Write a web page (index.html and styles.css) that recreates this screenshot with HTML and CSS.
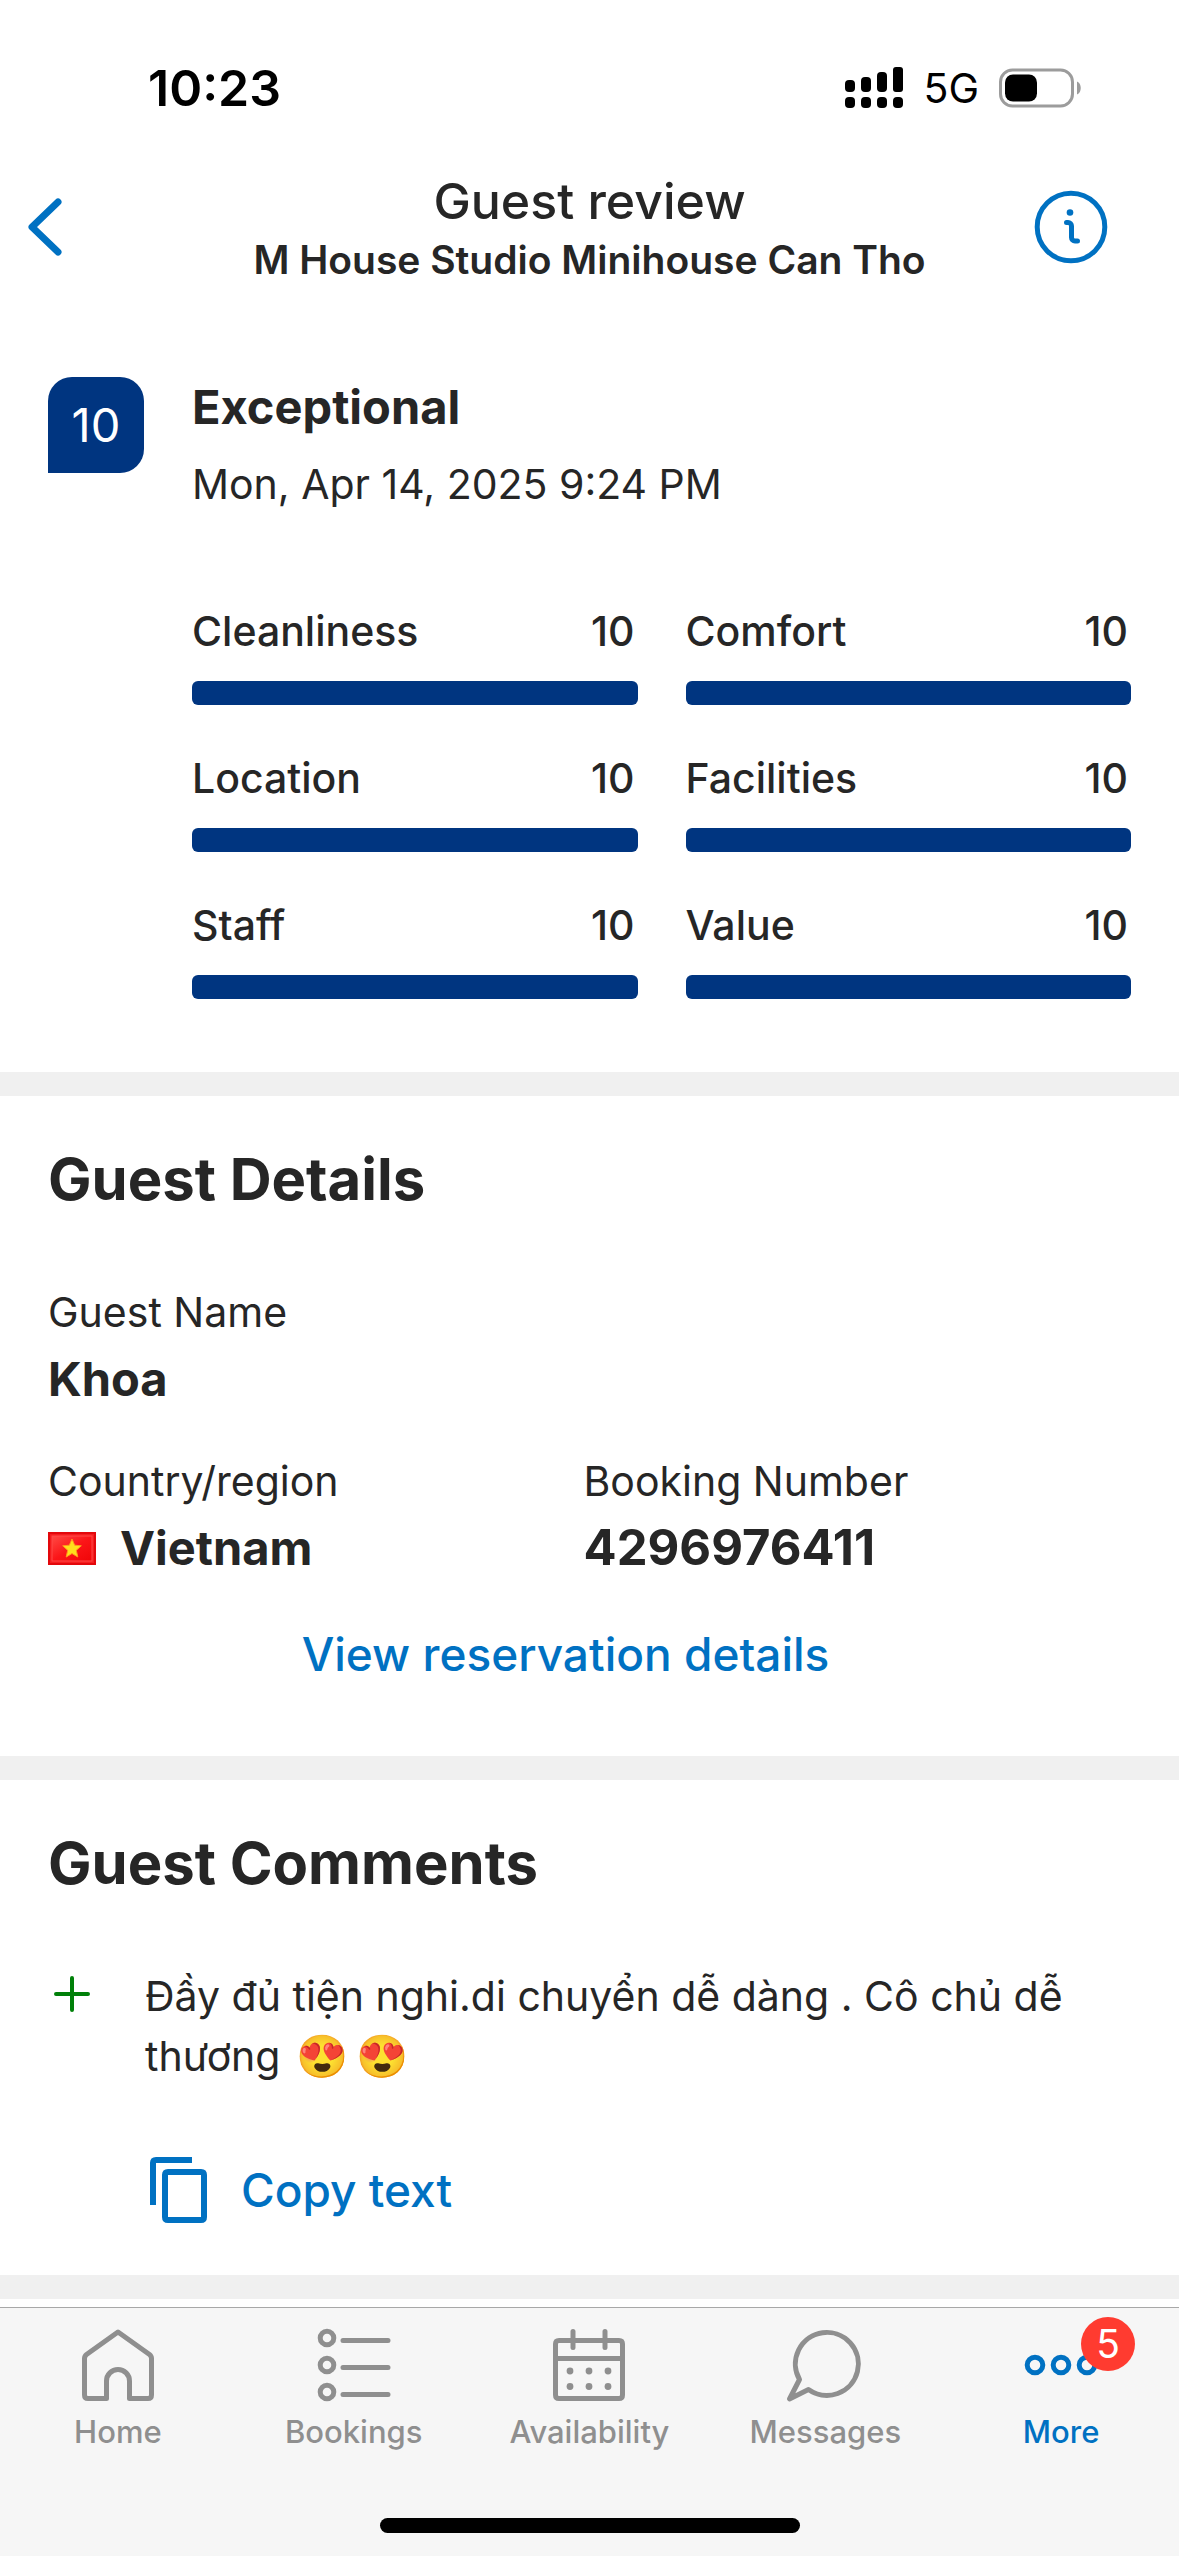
FILE: index.html
```html
<!DOCTYPE html>
<html lang="en">
<head>
<meta charset="utf-8">
<meta name="viewport" content="width=device-width, initial-scale=1">
<title>Guest review</title>
<link rel="stylesheet" href="styles.css">
</head>
<body>
<div class="screen">
  <div class="status">
    <span class="status-time">10:23</span>
    <div class="status-icons">
      <svg class="signal" viewBox="0 0 58 42" aria-hidden="true">
        <rect x="0" y="13" width="10" height="12" rx="4"/><rect x="16" y="10" width="10" height="15" rx="4"/><rect x="32" y="5" width="10" height="20" rx="4"/><rect x="48" y="0" width="10" height="25" rx="3"/>
        <rect x="0" y="30" width="10" height="11" rx="4"/><rect x="16" y="30" width="10" height="11" rx="4"/><rect x="32" y="30" width="10" height="11" rx="4"/><rect x="48" y="30" width="10" height="11" rx="4"/>
      </svg>
      <span class="status-net">5G</span>
      <svg class="battery" viewBox="0 0 82 40" aria-hidden="true">
        <rect x="1.5" y="2" width="72" height="36" rx="12" fill="none" stroke="#9c9c9c" stroke-width="3"/>
        <path d="M78 13.500c5 2 5 11 0 13z" fill="#9c9c9c"/>
        <rect x="6" y="6.500" width="32" height="27" rx="8"/>
      </svg>
    </div>
  </div>

  <header class="topbar">
    <button class="icon-btn back" type="button" aria-label="Back">
      <svg viewBox="0 0 36 60" class="chevron" aria-hidden="true"><path d="M32 5 6 30l26 25"/></svg>
    </button>
    <div class="heading">
      <h1 class="title">Guest review</h1>
      <p class="subtitle">M House Studio Minihouse Can Tho</p>
    </div>
    <button class="icon-btn info" type="button" aria-label="Information">
      <svg viewBox="0 0 72 72" class="info-icon" aria-hidden="true">
        <circle cx="36" cy="36" r="33.800"/>
        <path d="M31.500 31.500H33a3.500 3.500 0 0 1 3.500 3.500V46.500a3.500 3.500 0 0 0 3.500 3.500h2.500"/>
        <circle cx="35" cy="21.500" r="3.300" class="dot"/>
      </svg>
    </button>
  </header>

  <main class="content">
    <section class="review">
      <div class="score">10</div>
      <div class="review-body">
        <h2 class="strong">Exceptional</h2>
        <p class="date">Mon, Apr 14, 2025 9:24 PM</p>
        <div class="ratings">
          <div class="rating"><span>Cleanliness</span><span class="value">10</span><div class="bar"></div></div>
          <div class="rating"><span>Comfort</span><span class="value">10</span><div class="bar"></div></div>
          <div class="rating"><span>Location</span><span class="value">10</span><div class="bar"></div></div>
          <div class="rating"><span>Facilities</span><span class="value">10</span><div class="bar"></div></div>
          <div class="rating"><span>Staff</span><span class="value">10</span><div class="bar"></div></div>
          <div class="rating"><span>Value</span><span class="value">10</span><div class="bar"></div></div>
        </div>
      </div>
    </section>

    <section class="section details">
      <h2 class="section-title">Guest Details</h2>
      <dl class="fields">
        <div class="field wide"><dt>Guest Name</dt><dd class="strong">Khoa</dd></div>
        <div class="field"><dt>Country/region</dt>
          <dd class="strong country">
            <svg class="flag" viewBox="0 0 48 33" aria-hidden="true">
              <defs><linearGradient id="flagRed" x1="0" y1="0" x2="1" y2="1"><stop offset="0" stop-color="#ff4a44"/><stop offset=".5" stop-color="#fb1518"/><stop offset="1" stop-color="#f00508"/></linearGradient></defs>
              <rect width="48" height="33" fill="#e3080c"/>
              <rect x="2" y="2" width="44" height="29" fill="#f51d1f"/>
              <rect x="4" y="4" width="40" height="25" fill="url(#flagRed)" stroke="#ff4a48" stroke-width="1"/>
              <path d="M24 7l2.700 6.200 6.600.6-5 4.500 1.500 6.700-5.800-3.500-5.800 3.500 1.500-6.700-5-4.500 6.600-.6z" fill="#ffe01c" stroke="#ff9a1c" stroke-width="1"/>
            </svg>Vietnam</dd></div>
        <div class="field"><dt>Booking Number</dt><dd class="strong number">4296976411</dd></div>
      </dl>
      <a class="action reservation" href="#reservation">View reservation details</a>
    </section>

    <section class="section comments">
      <h2 class="section-title">Guest Comments</h2>
      <div class="comment">
        <svg class="plus" viewBox="0 0 40 40" aria-label="Positive" role="img"><path d="M20 4v32M4 20h32"/></svg>
        <div class="comment-body">
          <p class="comment-text">Đầy đủ tiện nghi.di chuyển dễ dàng . Cô chủ dễ thương <span class="emoji">😍</span><span class="emoji">😍</span></p>
          <button class="action copy" type="button">
            <svg class="copy-icon" viewBox="0 0 60 68" aria-hidden="true"><path d="M4 49V7q0-3 3-3h36M19 16h33q3 0 3 3v42q0 3-3 3H19q-3 0-3-3V19q0-3 3-3z"/></svg>
            Copy text
          </button>
        </div>
      </div>
    </section>
    <div class="section end"></div>
  </main>

  <nav class="tabbar" aria-label="Main">
    <a class="tab" href="#home">
      <svg class="tab-icon" viewBox="0 0 72 72" aria-hidden="true"><path d="M2.500 29.500Q2.500 27 4.500 25.500L36 3 67.500 25.500q2 1.500 2 4V66q0 3.500-3.500 3.500H47.500V52a11.500 11.500 0 0 0-23 0V69.500H6q-3.500 0-3.500-3.500z"/></svg>
      <span>Home</span>
    </a>
    <a class="tab" href="#bookings">
      <svg class="tab-icon" viewBox="0 0 72 72" aria-hidden="true"><circle cx="9" cy="9" r="6.800"/><circle cx="9" cy="36" r="6.800"/><circle cx="9" cy="63" r="6.800"/><path d="M25 11.500h45M25 38.500h45M25 65.500h45"/></svg>
      <span>Bookings</span>
    </a>
    <a class="tab" href="#availability">
      <svg class="tab-icon" viewBox="0 0 72 72" aria-hidden="true"><path d="M6 11.500h60q3.500 0 3.500 3.500v51q0 3.500-3.500 3.500H6q-3.500 0-3.500-3.500V15q0-3.500 3.500-3.500zM2.500 29.500h67M20 2.500v16M52 2.500v16"/><g class="dots"><circle cx="17" cy="42" r="3.400"/><circle cx="36" cy="42" r="3.400"/><circle cx="55" cy="42" r="3.400"/><circle cx="17" cy="57.500" r="3.400"/><circle cx="36" cy="57.500" r="3.400"/><circle cx="55" cy="57.500" r="3.400"/></g></svg>
      <span>Availability</span>
    </a>
    <a class="tab" href="#messages">
      <svg class="tab-icon" viewBox="0 0 72 72" aria-hidden="true"><path d="M10.500 50.500A31.500 31.500 0 1 1 19.500 60.500L.5 70z"/></svg>
      <span>Messages</span>
    </a>
    <a class="tab active" href="#more">
      <svg class="tab-icon" viewBox="0 0 72 72" aria-hidden="true"><circle cx="10" cy="36" r="7.800"/><circle cx="36" cy="36" r="7.800"/><circle cx="62" cy="36" r="7.800"/></svg>
      <span>More</span>
      <span class="badge">5</span>
    </a>
    <div class="home-indicator"></div>
  </nav>
</div>
</body>
</html>
```
FILE: styles.css
```css
* { box-sizing: border-box; }

body {
  margin: 0;
  background: #fff;
  color: #262626;
  font-family: Inter, "Liberation Sans", sans-serif;
  font-size: 41px;
  line-height: 60px;
}

h1, h2, p, dl, dd { margin: 0; }

button {
  padding: 0;
  border: 0;
  background: none;
  font: inherit;
  color: inherit;
}

svg { display: block; flex: none; overflow: visible; }

.screen {
  display: flex;
  flex-direction: column;
  min-height: 100vh;
}

.status {
  display: flex;
  justify-content: space-between;
  align-items: center;
  padding: 58px 98px 0 148px;
  color: #000;
}

.status-time { font-size: 50px; font-weight: 600; }
.status-icons { display: flex; align-items: center; gap: 20px; }
.signal { width: 58px; height: 42px; }
.battery { width: 82px; height: 40px; }

.topbar {
  display: flex;
  align-items: center;
  padding: 48px 72px 0 26px;
  height: 170px;
}

.icon-btn { flex: none; width: 120px; }
.back { width: 166px; }
.chevron { width: 36px; height: 60px; }
.chevron path { fill: none; stroke: #0071c2; stroke-width: 7; stroke-linecap: round; stroke-linejoin: round; }
.info-icon { width: 72px; height: 72px; margin-left: auto; fill: none; stroke: #0071c2; stroke-width: 5; stroke-linecap: round; }
.info-icon .dot { fill: #0071c2; stroke: none; }

.heading { flex: 1; padding-top: 6px; text-align: center; }
.title { font-size: 50px; font-weight: 500; }
.subtitle { font-size: 39px; font-weight: 600; line-height: 58px; }

.review {
  display: flex;
  gap: 48px;
  padding: 89px 48px 72px;
}

.score {
  flex: none;
  width: 96px;
  height: 96px;
  border-radius: 24px 24px 24px 0;
  background: #003580;
  color: #fff;
  font-size: 47px;
  line-height: 96px;
  text-align: center;
}

.review-body { flex: 1; }
.strong { font-size: 47px; font-weight: 700; }
.date { padding-top: 17px; }

.ratings {
  display: grid;
  grid-template-columns: 1fr 1fr;
  gap: 42px 48px;
  padding-top: 87px;
}

.rating {
  display: grid;
  grid-template-columns: 1fr auto;
  gap: 20px 0;
  font-weight: 500;
}

.value { padding-right: 3px; }

.bar {
  grid-column: 1 / -1;
  height: 24px;
  margin-bottom: 1px;
  border-radius: 6px;
  background: #003580;
}

.section { border-top: 24px solid #f0f0f0; padding: 0 48px; }
.section-title { padding-top: 53px; font-size: 58px; font-weight: 700; }

.fields {
  display: grid;
  grid-template-columns: 1fr 1fr;
  row-gap: 42px;
  padding: 73px 12px 0 0;
}

.field dd { padding-top: 7px; }
.field .number { font-size: 49px; }
.wide { grid-column: 1 / -1; }
.country { display: flex; align-items: center; gap: 24px; }
.flag { width: 48px; height: 33px; }

.action { color: #0071c2; font-size: 46px; font-weight: 500; }
.reservation { display: block; padding: 46px 48px 72px 0; text-align: center; text-decoration: none; }

.comment { display: flex; gap: 53px; padding: 73px 0 51px; }
.plus { width: 40px; height: 40px; margin: 8px 0 0 4px; fill: none; stroke: #008009; stroke-width: 4; stroke-linecap: round; }
.comment-body { flex: 1; }
.emoji { margin: 0 4px; font-size: 42px; line-height: 1; }
.copy { display: flex; align-items: center; gap: 32px; padding: 70px 0 0 4px; }
.copy-icon { width: 60px; height: 68px; fill: none; stroke: #0071c2; stroke-width: 6; }
.end { padding: 0; height: 32px; }

.tabbar {
  display: grid;
  grid-template-columns: repeat(5, 1fr);
  flex: 1;
  align-content: start;
  border-top: 1px solid #a8a8a8;
  background: #f6f6f6;
  padding-top: 21px;
}

.tab {
  position: relative;
  display: flex;
  flex-direction: column;
  align-items: center;
  gap: 11px;
  color: #8f8f8f;
  font-size: 31px;
  font-weight: 500;
  line-height: 40px;
  text-decoration: none;
}

.tab-icon { width: 72px; height: 72px; fill: none; stroke: currentColor; stroke-width: 5; stroke-linecap: round; stroke-linejoin: round; }
.dots { fill: currentColor; stroke: none; }
.active { color: #0071c2; }

.badge {
  position: absolute;
  top: -12px;
  left: calc(50% + 20px);
  width: 54px;
  height: 54px;
  border-radius: 50%;
  background: #ff3b30;
  color: #fff;
  font-size: 39px;
  font-weight: 400;
  line-height: 54px;
  text-align: center;
}

.home-indicator {
  grid-column: 1 / -1;
  justify-self: center;
  width: 420px;
  height: 15px;
  margin: 66px 0 24px;
  border-radius: 8px;
  background: #000;
}
```
